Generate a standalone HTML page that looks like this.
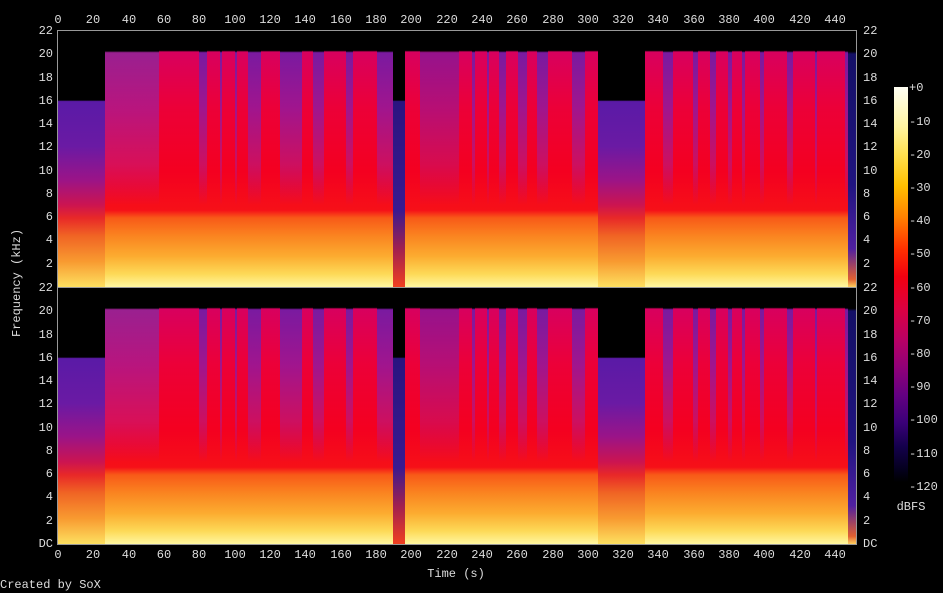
<!DOCTYPE html><html><head><meta charset="utf-8"><style>
body{margin:0;background:#000;width:943px;height:593px;overflow:hidden;position:relative;font-family:"Liberation Mono","DejaVu Sans Mono",monospace;font-size:12px;color:#ddd}
.t{position:absolute;line-height:12px;white-space:nowrap}
.xl{transform:translateX(-50%)}
.yl{transform:translateY(-50%)}
.r{text-align:right;width:40px}
.ch{position:absolute;left:58px;width:798px;height:256px;overflow:hidden;
background:linear-gradient(to bottom,#000 0,#000 7.6%,#d8005e 8.2%,#ec0038 30%,#f40020 55%,#f61018 70%,#f85a18 73%,#fa8420 80%,#fcac30 88%,#fdda58 95%,#fff7a0 100%)}
.s{position:absolute;top:0;height:100%}
.p{background:linear-gradient(to bottom,#000 0,#000 7.8%,#7a1aa0 8.5%,#a0158e 30%,#cc1060 52%,rgba(240,16,40,0) 68%)}
.q{background:linear-gradient(to bottom,#000 0,#000 27%,#5a1aa6 27.5%,#6a1aa4 45%,#9a1488 58%,#cc1450 68%,#e82828 73%,#f06424 80%,#f89a30 90%,#fde060 100%)}
.m{background:linear-gradient(to bottom,#000 0,#000 7.8%,#9a2090 8.5%,#b8157e 30%,#d81058 52%,rgba(240,16,40,0) 68%)}
.frame{position:absolute;border:1px solid #999;box-sizing:border-box}
.tk{position:absolute;background:#999}
</style></head><body>

<div class="ch" style="top:31px">
<div class="s q" style="left:0;width:47px"></div>
<div class="s m" style="left:47px;width:54px"></div>
<div class="s p" style="left:141px;width:8px"></div>
<div class="s p" style="left:162px;width:2px"></div>
<div class="s p" style="left:177px;width:2px"></div>
<div class="s p" style="left:190px;width:13px"></div>
<div class="s p" style="left:222px;width:22px"></div>
<div class="s p" style="left:255px;width:11px"></div>
<div class="s p" style="left:288px;width:7px"></div>
<div class="s p" style="left:319px;width:16px"></div>
<div class="s" style="left:335px;width:12px;background:linear-gradient(to bottom,#000 0,#000 27%,#2a1480 27.5%,#3a1a90 70%,#a02050 85%,#f04020 100%)"></div>
<div class="s p" style="left:362px;width:39px;opacity:.7"></div>
<div class="s p" style="left:414px;width:3px"></div>
<div class="s p" style="left:429px;width:2px"></div>
<div class="s p" style="left:441px;width:7px"></div>
<div class="s p" style="left:460px;width:9px"></div>
<div class="s p" style="left:479px;width:11px"></div>
<div class="s p" style="left:514px;width:13px"></div>
<div class="s q" style="left:540px;width:47px"></div>
<div class="s p" style="left:605px;width:10px"></div>
<div class="s p" style="left:635px;width:5px"></div>
<div class="s p" style="left:652px;width:6px"></div>
<div class="s p" style="left:670px;width:4px"></div>
<div class="s p" style="left:684px;width:3px"></div>
<div class="s p" style="left:702px;width:4px"></div>
<div class="s p" style="left:729px;width:6px"></div>
<div class="s p" style="left:757px;width:2px"></div>
<div class="s p" style="left:787px;width:3px"></div>
<div class="s" style="left:790px;width:8px;background:linear-gradient(to bottom,#000 0,#000 8%,#141066 9%,#201480 60%,#5020a0 85%,#e06030 97%,#ffd060 100%)"></div>
</div>

<div class="ch" style="top:288px">
<div class="s q" style="left:0;width:47px"></div>
<div class="s m" style="left:47px;width:54px"></div>
<div class="s p" style="left:141px;width:8px"></div>
<div class="s p" style="left:162px;width:2px"></div>
<div class="s p" style="left:177px;width:2px"></div>
<div class="s p" style="left:190px;width:13px"></div>
<div class="s p" style="left:222px;width:22px"></div>
<div class="s p" style="left:255px;width:11px"></div>
<div class="s p" style="left:288px;width:7px"></div>
<div class="s p" style="left:319px;width:16px"></div>
<div class="s" style="left:335px;width:12px;background:linear-gradient(to bottom,#000 0,#000 27%,#2a1480 27.5%,#3a1a90 70%,#a02050 85%,#f04020 100%)"></div>
<div class="s p" style="left:362px;width:39px;opacity:.7"></div>
<div class="s p" style="left:414px;width:3px"></div>
<div class="s p" style="left:429px;width:2px"></div>
<div class="s p" style="left:441px;width:7px"></div>
<div class="s p" style="left:460px;width:9px"></div>
<div class="s p" style="left:479px;width:11px"></div>
<div class="s p" style="left:514px;width:13px"></div>
<div class="s q" style="left:540px;width:47px"></div>
<div class="s p" style="left:605px;width:10px"></div>
<div class="s p" style="left:635px;width:5px"></div>
<div class="s p" style="left:652px;width:6px"></div>
<div class="s p" style="left:670px;width:4px"></div>
<div class="s p" style="left:684px;width:3px"></div>
<div class="s p" style="left:702px;width:4px"></div>
<div class="s p" style="left:729px;width:6px"></div>
<div class="s p" style="left:757px;width:2px"></div>
<div class="s p" style="left:787px;width:3px"></div>
<div class="s" style="left:790px;width:8px;background:linear-gradient(to bottom,#000 0,#000 8%,#141066 9%,#201480 60%,#5020a0 85%,#e06030 97%,#ffd060 100%)"></div>
</div>

<div class="frame" style="left:57px;top:30px;width:800px;height:515px"></div>
<div class="tk" style="left:57px;top:287px;width:800px;height:1px"></div>

<div class="t xl" style="left:58px;top:14px">0</div><div class="t xl" style="left:93px;top:14px">20</div><div class="t xl" style="left:129px;top:14px">40</div><div class="t xl" style="left:164px;top:14px">60</div><div class="t xl" style="left:199px;top:14px">80</div><div class="t xl" style="left:235px;top:14px">100</div><div class="t xl" style="left:270px;top:14px">120</div><div class="t xl" style="left:305px;top:14px">140</div><div class="t xl" style="left:341px;top:14px">160</div><div class="t xl" style="left:376px;top:14px">180</div><div class="t xl" style="left:411px;top:14px">200</div><div class="t xl" style="left:447px;top:14px">220</div><div class="t xl" style="left:482px;top:14px">240</div><div class="t xl" style="left:517px;top:14px">260</div><div class="t xl" style="left:553px;top:14px">280</div><div class="t xl" style="left:588px;top:14px">300</div><div class="t xl" style="left:623px;top:14px">320</div><div class="t xl" style="left:658px;top:14px">340</div><div class="t xl" style="left:694px;top:14px">360</div><div class="t xl" style="left:729px;top:14px">380</div><div class="t xl" style="left:764px;top:14px">400</div><div class="t xl" style="left:800px;top:14px">420</div><div class="t xl" style="left:835px;top:14px">440</div>

<div class="t xl" style="left:58px;top:549px">0</div><div class="t xl" style="left:93px;top:549px">20</div><div class="t xl" style="left:129px;top:549px">40</div><div class="t xl" style="left:164px;top:549px">60</div><div class="t xl" style="left:199px;top:549px">80</div><div class="t xl" style="left:235px;top:549px">100</div><div class="t xl" style="left:270px;top:549px">120</div><div class="t xl" style="left:305px;top:549px">140</div><div class="t xl" style="left:341px;top:549px">160</div><div class="t xl" style="left:376px;top:549px">180</div><div class="t xl" style="left:411px;top:549px">200</div><div class="t xl" style="left:447px;top:549px">220</div><div class="t xl" style="left:482px;top:549px">240</div><div class="t xl" style="left:517px;top:549px">260</div><div class="t xl" style="left:553px;top:549px">280</div><div class="t xl" style="left:588px;top:549px">300</div><div class="t xl" style="left:623px;top:549px">320</div><div class="t xl" style="left:658px;top:549px">340</div><div class="t xl" style="left:694px;top:549px">360</div><div class="t xl" style="left:729px;top:549px">380</div><div class="t xl" style="left:764px;top:549px">400</div><div class="t xl" style="left:800px;top:549px">420</div><div class="t xl" style="left:835px;top:549px">440</div>

<div class="t yl r" style="left:13px;top:31px">22</div><div class="t yl r" style="left:13px;top:54px">20</div><div class="t yl r" style="left:13px;top:78px">18</div><div class="t yl r" style="left:13px;top:101px">16</div><div class="t yl r" style="left:13px;top:124px">14</div><div class="t yl r" style="left:13px;top:147px">12</div><div class="t yl r" style="left:13px;top:171px">10</div><div class="t yl r" style="left:13px;top:194px">8</div><div class="t yl r" style="left:13px;top:217px">6</div><div class="t yl r" style="left:13px;top:240px">4</div><div class="t yl r" style="left:13px;top:264px">2</div>
<div class="t yl r" style="left:13px;top:288px">22</div><div class="t yl r" style="left:13px;top:311px">20</div><div class="t yl r" style="left:13px;top:335px">18</div><div class="t yl r" style="left:13px;top:358px">16</div><div class="t yl r" style="left:13px;top:381px">14</div><div class="t yl r" style="left:13px;top:404px">12</div><div class="t yl r" style="left:13px;top:428px">10</div><div class="t yl r" style="left:13px;top:451px">8</div><div class="t yl r" style="left:13px;top:474px">6</div><div class="t yl r" style="left:13px;top:497px">4</div><div class="t yl r" style="left:13px;top:521px">2</div><div class="t yl r" style="left:13px;top:544px">DC</div>

<div class="t yl" style="left:863px;top:31px">22</div><div class="t yl" style="left:863px;top:54px">20</div><div class="t yl" style="left:863px;top:78px">18</div><div class="t yl" style="left:863px;top:101px">16</div><div class="t yl" style="left:863px;top:124px">14</div><div class="t yl" style="left:863px;top:147px">12</div><div class="t yl" style="left:863px;top:171px">10</div><div class="t yl" style="left:863px;top:194px">8</div><div class="t yl" style="left:863px;top:217px">6</div><div class="t yl" style="left:863px;top:240px">4</div><div class="t yl" style="left:863px;top:264px">2</div>
<div class="t yl" style="left:863px;top:288px">22</div><div class="t yl" style="left:863px;top:311px">20</div><div class="t yl" style="left:863px;top:335px">18</div><div class="t yl" style="left:863px;top:358px">16</div><div class="t yl" style="left:863px;top:381px">14</div><div class="t yl" style="left:863px;top:404px">12</div><div class="t yl" style="left:863px;top:428px">10</div><div class="t yl" style="left:863px;top:451px">8</div><div class="t yl" style="left:863px;top:474px">6</div><div class="t yl" style="left:863px;top:497px">4</div><div class="t yl" style="left:863px;top:521px">2</div><div class="t yl" style="left:863px;top:544px">DC</div>

<div class="t" style="left:-33px;top:281px;width:100px;text-align:center;transform:rotate(-90deg)">Frequency (kHz)</div>
<div class="t xl" style="left:456px;top:568px">Time (s)</div>
<div class="t" style="left:0;top:579px">Created by SoX</div>

<div style="position:absolute;left:894px;top:87px;width:14px;height:395px;background:linear-gradient(to bottom,#fffff4 0%,#fff4a0 10%,#ffe050 17%,#ffc000 25%,#ff8000 33%,#ff3000 41%,#f20010 48%,#dc0040 56%,#b80064 64%,#900078 71%,#640082 78%,#3a0078 85%,#14004c 91%,#04001c 97%,#000 100%)"></div>
<div class="t yl" style="left:909px;top:88px">+0</div><div class="t yl" style="left:909px;top:122px">-10</div><div class="t yl" style="left:909px;top:155px">-20</div><div class="t yl" style="left:909px;top:188px">-30</div><div class="t yl" style="left:909px;top:221px">-40</div><div class="t yl" style="left:909px;top:254px">-50</div><div class="t yl" style="left:909px;top:288px">-60</div><div class="t yl" style="left:909px;top:321px">-70</div><div class="t yl" style="left:909px;top:354px">-80</div><div class="t yl" style="left:909px;top:387px">-90</div><div class="t yl" style="left:909px;top:420px">-100</div><div class="t yl" style="left:909px;top:454px">-110</div><div class="t yl" style="left:909px;top:487px">-120</div>
<div class="t xl" style="left:911px;top:501px">dBFS</div>
</body></html>
